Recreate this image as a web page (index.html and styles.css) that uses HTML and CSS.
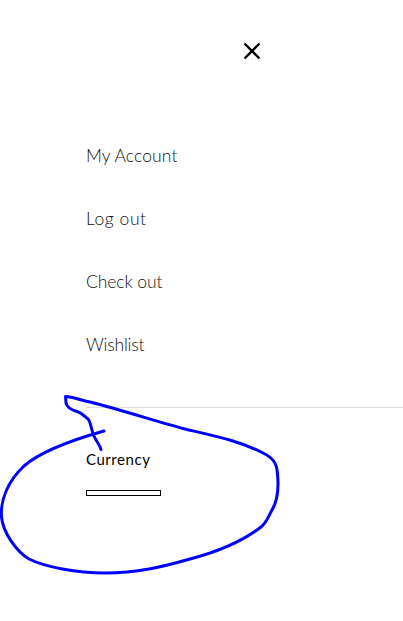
FILE: index.html
```html
<!DOCTYPE html>
<html lang="en">
<head>
  <meta charset="UTF-8">
  <meta name="viewport" content="width=device-width, initial-scale=1.0">
  <title>My Account</title>
  <link rel="stylesheet" href="styles.css">
</head>
<body>
  <div class="sidebar">
    <!-- Close Button -->
    <button type="button" class="close-btn" aria-label="Close">
      <svg width="18" height="18" viewBox="0 0 18 18">
        <path d="M1.5 1.5 L16.5 16.5 M16.5 1.5 L1.5 16.5" />
      </svg>
    </button>

    <!-- Account Links -->
    <ul class="menu">
      <li><a href="#" class="account">My Account</a></li>
      <li><a href="#" class="logout">Log out</a></li>
      <li><a href="#" class="checkout">Check out</a></li>
      <li><a href="#" class="wishlist">Wishlist</a></li>
    </ul>

    <!-- Currency -->
    <div class="currency">
      <h4>Currency</h4>
      <div class="currency-select"></div>
    </div>
  </div>

  <!-- Pen Drawing -->
  <svg class="pen" width="403" height="621" viewBox="0 0 403 621">
    <path d="M101 449.500 C100 445 96 441 94 436 C91 430 91 422 88 419 C84 416 82 413 77 411.500 C72 410 67 408 66 403 L65.500 396.500 C72 396.500 80 400 90 402 C125 411 155 421 185 429 C215 436 240 441 263 453 C273 458 277 463 277.500 474 C279 489 278 500 272 510 C268 517 267 522 261 527 C243 541 217 552 190 559 C162 567 137 573 105 573 C77 573 45 567 29 559 C17 552 3 533 1.500 517 C0 499 9 480 24 466 C40 452 72 440 104 431" />
  </svg>
</body>
</html>
```

FILE: styles.css
```css
body {
  margin: 0;
  font-family: Lato, sans-serif;
  background-color: #fff;
  color: #222;
}
.sidebar {
  display: flex;
  flex-direction: column;
  box-sizing: border-box;
  height: 621px;
  padding: 42px 0 0 86px;
}
.close-btn {
  width: 18px;
  height: 18px;
  margin-left: 157px;
  padding: 0;
  border: none;
  background: none;
  cursor: pointer;
}
.close-btn svg {
  display: block;
}
.close-btn path {
  fill: none;
  stroke: #000;
  stroke-width: 2.3;
}
.menu {
  margin: 0;
  padding: 64px 0 0;
  list-style: none;
}
.menu li {
  height: 63px;
  line-height: 63px;
}
.menu a {
  color: #111;
  font-size: 17.5px;
  font-weight: 300;
  text-decoration: none;
  white-space: nowrap;
}
.account {
  letter-spacing: 0.1px;
}
.logout {
  letter-spacing: 0.55px;
}
.checkout {
  letter-spacing: -0.1px;
}
.wishlist {
  letter-spacing: -0.2px;
}
.currency {
  margin-top: 31px;
  padding-top: 41px;
  border-top: 1px solid #ddd;
}
.currency h4 {
  margin: 0;
  color: #000;
  font-size: 15px;
  font-weight: 400;
  line-height: 20px;
  letter-spacing: 0.55px;
}
.currency-select {
  box-sizing: border-box;
  width: 75px;
  height: 6px;
  margin-top: 21px;
  border: 1px solid #000;
}
.pen {
  position: absolute;
  top: 0;
  left: 0;
  pointer-events: none;
}
.pen path {
  fill: none;
  stroke: #0000fe;
  stroke-width: 3;
  stroke-linecap: round;
  stroke-linejoin: round;
}
```
